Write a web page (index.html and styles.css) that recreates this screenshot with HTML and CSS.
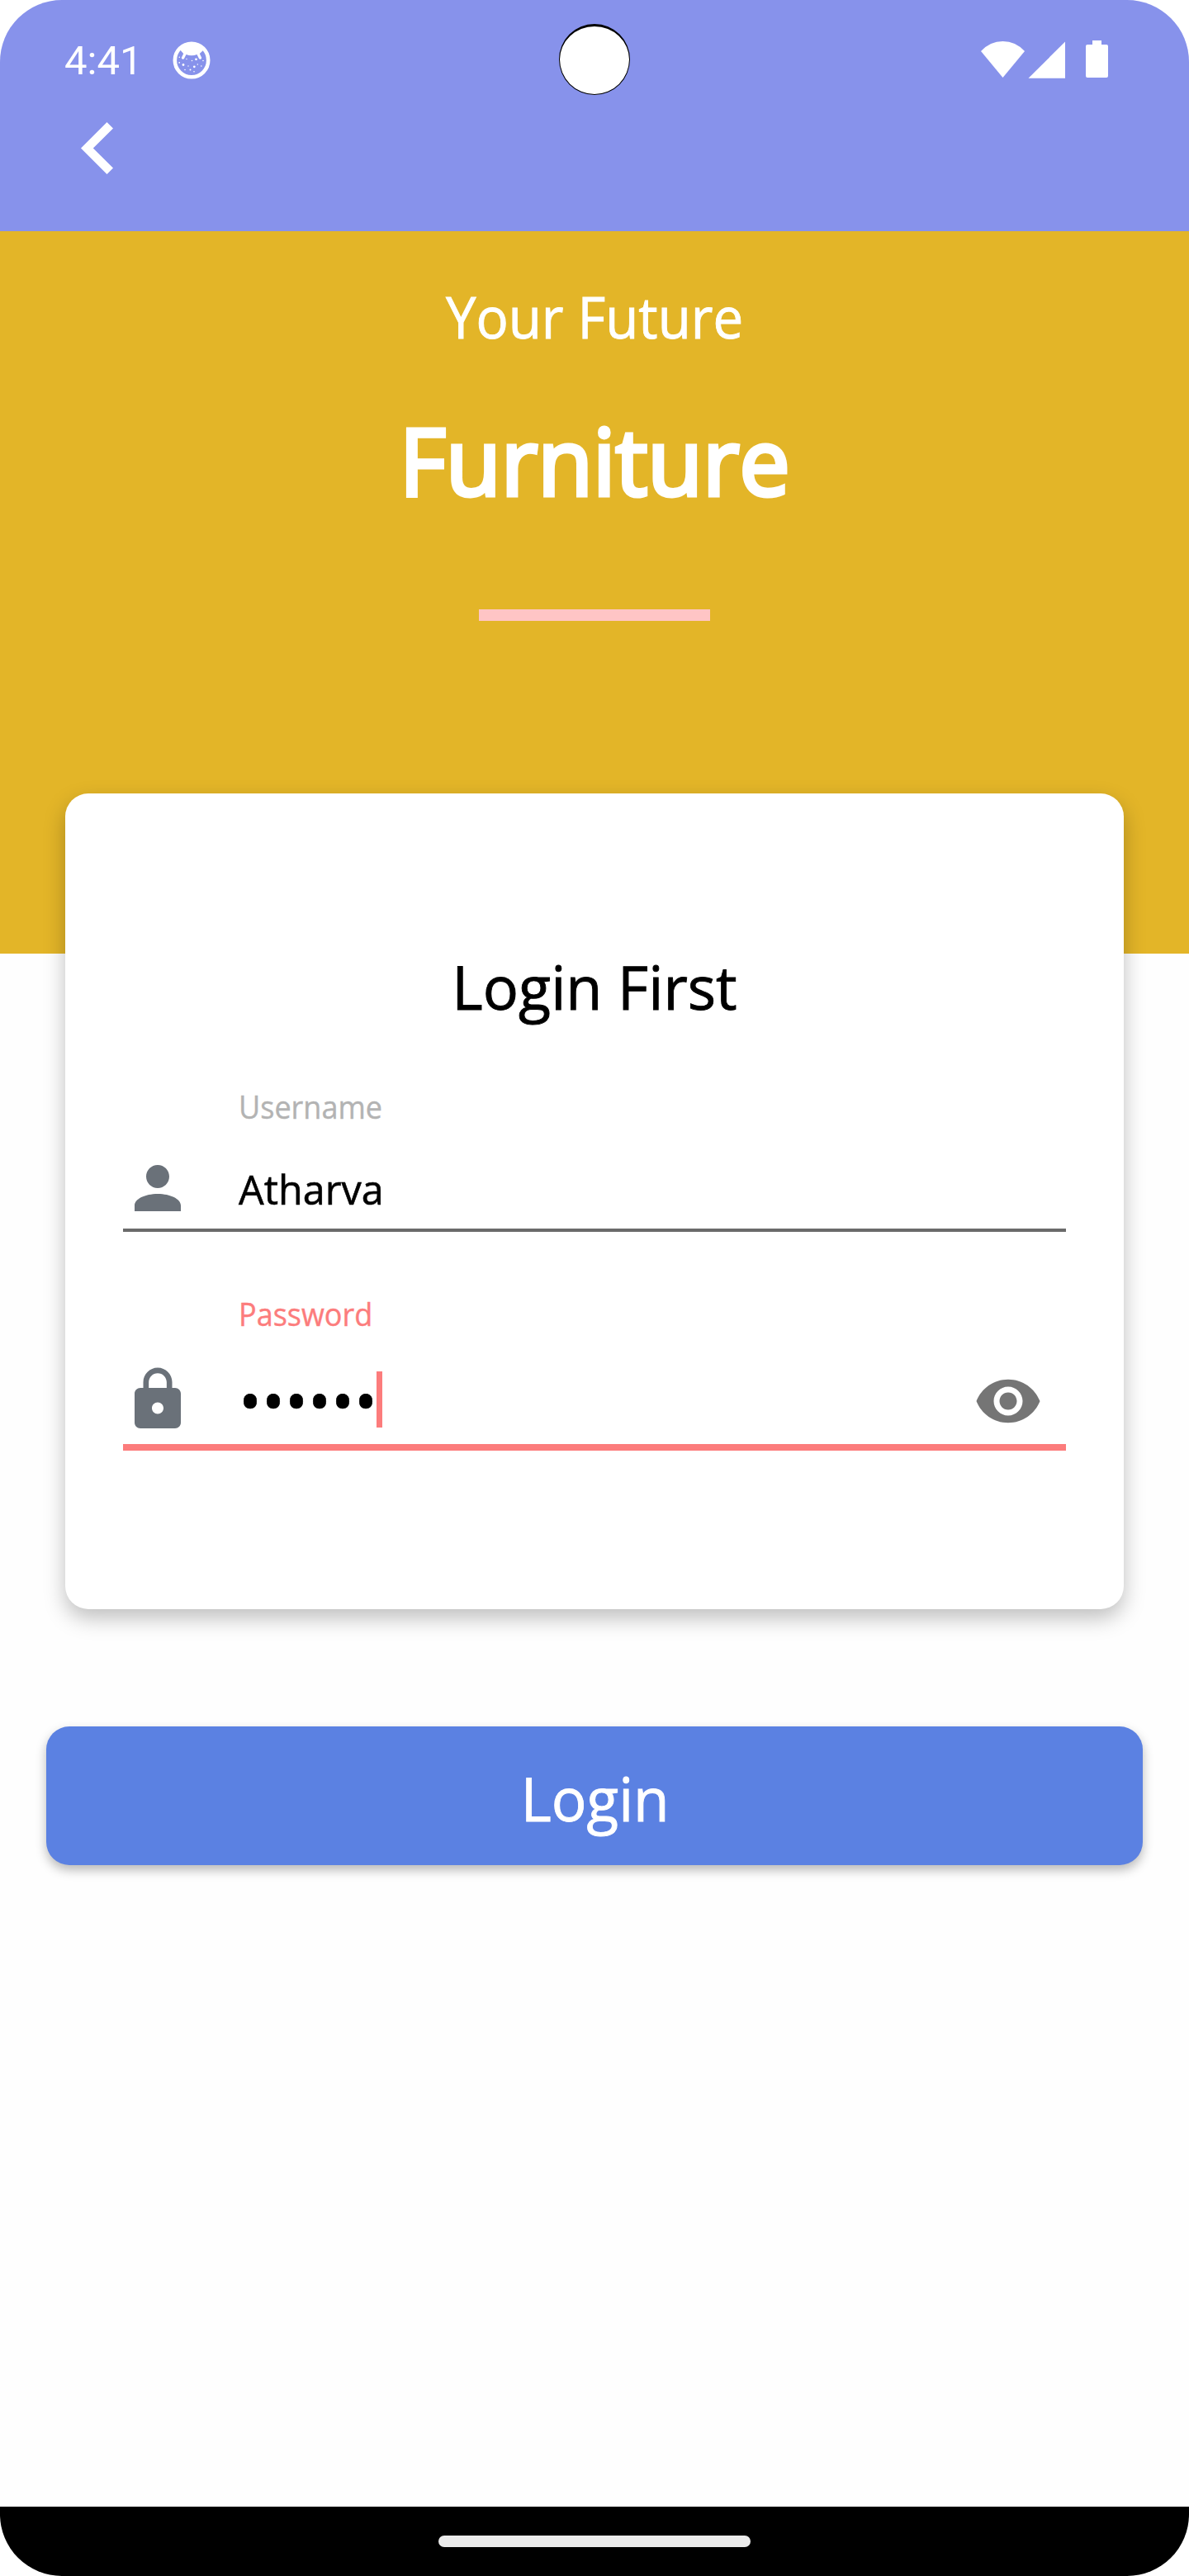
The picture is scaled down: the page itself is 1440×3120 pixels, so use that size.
FILE: index.html
```html
<!DOCTYPE html>
<html lang="en">
<head>
<meta charset="utf-8">
<title>Login</title>
<link rel="stylesheet" href="styles.css">
</head>
<body>
<div class="screen">
  <header class="topbar">
    <div class="status">
      <span class="clock">4:41</span>
      <svg class="face" viewBox="0 0 46 46">
        <circle cx="23" cy="23" r="20.2" fill="none" stroke="#fff" stroke-width="4.6"/>
        <path fill="#fff" d="M8 9Q23-3 38 9L36.500 11.500L32.800 15L35 19.500A1.700 1.700 0 0 1 32 21L29.500 16Q23 18.500 16.500 16L14 21A1.700 1.700 0 0 1 11 19.500L13.200 15Z"/>
        <g fill="#fff"><circle cx="13" cy="28.500" r="1.400"/><circle cx="26.300" cy="30.800" r="1.400"/><circle cx="28.500" cy="21.800" r="1.400"/><circle cx="19" cy="30" r=".7"/><circle cx="21.500" cy="34.500" r="1"/><circle cx="15" cy="34.500" r=".8"/><circle cx="34.800" cy="30" r=".8"/><circle cx="30.300" cy="28" r=".7"/><circle cx="23.500" cy="23.500" r=".8"/><circle cx="17" cy="21.500" r=".7"/><circle cx="26" cy="36.700" r=".8"/><circle cx="8.200" cy="25.800" r=".9"/><circle cx="8.300" cy="19.300" r=".8"/><circle cx="37" cy="23.500" r=".8"/></g>
      </svg>
      <svg class="signals" viewBox="0 0 156 48" fill="#fff">
        <path d="M1 14Q12 2 27.500 2T54 14L27.500 46Z"/>
        <path d="M103 2.500V46.700H58.500Z"/>
        <path d="M136 1h11v5h6q2 0 2 2v36q0 2-2 2h-23q-2 0-2-2V8q0-2 2-2h6Z"/>
      </svg>
    </div>
    <svg class="back" viewBox="0 0 40 64"><path fill="#fff" d="M0 31.500L31.500 0L39 7.500L14.800 31.500L39 55.500L31.500 63Z"/></svg>
    <div class="camera"></div>
  </header>

  <section class="hero">
    <p class="tagline">Your Future</p>
    <h1 class="brand">Furniture</h1>
    <div class="rule"></div>
  </section>

  <main class="content">
    <form class="card">
      <h2 class="title">Login First</h2>
      <div class="field">
        <label class="label">Username</label>
        <div class="row row-user">
          <svg class="icon" viewBox="0 0 24 24" fill="#6a7179"><path d="M12 12c2.210 0 4-1.790 4-4s-1.790-4-4-4-4 1.790-4 4 1.790 4 4 4zm0 2c-4.420 0-8 1.790-8 4v2h16v-2c0-2.210-3.580-4-8-4z"/></svg>
          <span class="value">Atharva</span>
        </div>
      </div>
      <div class="field field-active">
        <label class="label">Password</label>
        <div class="row row-pass">
          <svg class="icon" viewBox="0 0 24 24" fill="#6a7179"><path d="M18 8h-1V6c0-2.760-2.240-5-5-5S7 3.240 7 6v2H6c-1.100 0-2 .9-2 2v10c0 1.100.9 2 2 2h12c1.100 0 2-.9 2-2V10c0-1.100-.9-2-2-2zm-6 9c-1.100 0-2-.9-2-2s.9-2 2-2 2 .9 2 2-.9 2-2 2zm3.100-9H8.900V6c0-1.710 1.390-3.100 3.100-3.100 1.710 0 3.100 1.390 3.100 3.100v2z"/></svg>
          <span class="dots">••••••</span>
          <span class="caret"></span>
          <svg class="eye" viewBox="0 0 24 24" fill="#757575"><path d="M12 4.500C7 4.500 2.730 7.610 1 12c1.730 4.390 6 7.500 11 7.500s9.270-3.110 11-7.500c-1.730-4.390-6-7.500-11-7.500zM12 17c-2.760 0-5-2.240-5-5s2.240-5 5-5 5 2.240 5 5-2.240 5-5 5zm0-8c-1.660 0-3 1.340-3 3s1.340 3 3 3 3-1.340 3-3-1.340-3-3-3z"/></svg>
        </div>
      </div>
    </form>
    <button class="login"><span class="login-text">Login</span></button>
  </main>

  <footer class="navbar"><div class="handle"></div></footer>
</div>
</body>
</html>
```

FILE: styles.css
```css
* { box-sizing: border-box; }
body { margin: 0; background: #fff; font-family: "Open Sans", sans-serif; }
p, h1, h2 { margin: 0; font-weight: 400; }
svg { display: block; flex: none; }

.screen {
  width: 1440px;
  height: 3120px;
  display: flex;
  flex-direction: column;
  background: #fefefe;
  border-radius: 75px;
  overflow: hidden;
}

/* Top bar */
.topbar { position: relative; height: 280px; flex: none; background: #8792eb; }
.status { display: flex; align-items: center; height: 146px; padding: 0 97px 0 78px; }
.clock { margin-top: 2px; width: 130.500px; font: 49px/60px Roboto, sans-serif; color: #fff; }
.face { width: 46px; height: 46px; }
.signals { width: 156px; height: 48px; margin-left: auto; margin-top: -3px; }
.back { width: 40px; height: 64px; margin: 2px 0 0 98px; }
.camera {
  position: absolute;
  left: 677px;
  top: 29px;
  width: 86px;
  height: 86px;
  border: solid #000;
  border-width: 3px 1.500px 1px;
  border-radius: 50%;
  background: #fff;
}

/* Banner */
.hero {
  height: 875px;
  flex: none;
  padding-top: 59px;
  display: flex;
  flex-direction: column;
  align-items: center;
  background: #e3b528;
  color: #fff;
}
.tagline { font-size: 68.600px; line-height: 90px; -webkit-text-stroke: .9px #fff; transform: scaleX(.953); }
.brand {
  margin-top: 58px;
  font-size: 112px;
  line-height: 140px;
  -webkit-text-stroke: 5px #fff;
  transform: scaleX(.972);
}
.rule { margin-top: 111px; width: 280px; height: 14px; background: #ffc5c5; }

/* Card */
.content { flex: 1; padding: 0 56px; margin-top: -194px; }
.card {
  margin: 0 23px;
  height: 988px;
  padding: 184px 70px 0;
  border-radius: 28px;
  background: #fff;
  box-shadow: 0 11px 26px rgba(0, 0, 0, .25);
}
.title {
  font-size: 74px;
  line-height: 100px;
  text-align: center;
  color: #000;
  -webkit-text-stroke: .9px #000;
  transform: scaleX(.972);
}
.field { margin-top: 71px; }
.label {
  display: block;
  margin-left: 140px;
  font-size: 37.500px;
  line-height: 50px;
  color: #b3b3b3;
  -webkit-text-stroke: .4px currentColor;
  transform: scaleX(.96);
  transform-origin: left;
}
.row { display: flex; align-items: flex-start; }
.row-user { height: 126px; border-bottom: 4px solid #6b6b6b; }
.icon { width: 84px; height: 84px; margin: 31px 56px 0 0; }
.value {
  margin-top: 39px;
  font-size: 49px;
  line-height: 70px;
  color: #000;
  -webkit-text-stroke: .6px #000;
  transform: scaleX(.99);
  transform-origin: left;
}

.field-active { margin-top: 75px; }
.field-active .label { color: #fc7c7c; }
.row-pass { height: 140px; border-bottom: 8px solid #fc7c7c; }
.row-pass .icon { margin-top: 36px; }
.dots {
  margin-top: 29px;
  width: 167px;
  font-size: 74.500px;
  line-height: 100px;
  color: #000;
  white-space: nowrap;
  -webkit-text-stroke: .6px #000;
}
.caret { width: 7px; height: 68px; margin-top: 44px; background: #fc7c7c; }
.eye { width: 84px; height: 84px; margin: 38px 28px 0 auto; }

/* Button */
.login {
  display: flex;
  align-items: center;
  justify-content: center;
  width: 1328px;
  height: 168px;
  margin-top: 142px;
  padding: 0 0 0 1px;
  border: 0;
  border-radius: 28px;
  background: #5b81e2;
  color: #fff;
  box-shadow: 0 6px 13px rgba(0, 0, 0, .28);
}
.login-text {
  margin-top: 5px;
  font: 74px/100px "Open Sans", sans-serif;
  -webkit-text-stroke: .9px #fff;
  transform: scaleX(.96);
}

/* System navigation */
.navbar { height: 84px; flex: none; display: flex; justify-content: center; padding-top: 35px; background: #000; }
.handle { width: 378px; height: 14px; border-radius: 7px; background: #ebebeb; }
```
